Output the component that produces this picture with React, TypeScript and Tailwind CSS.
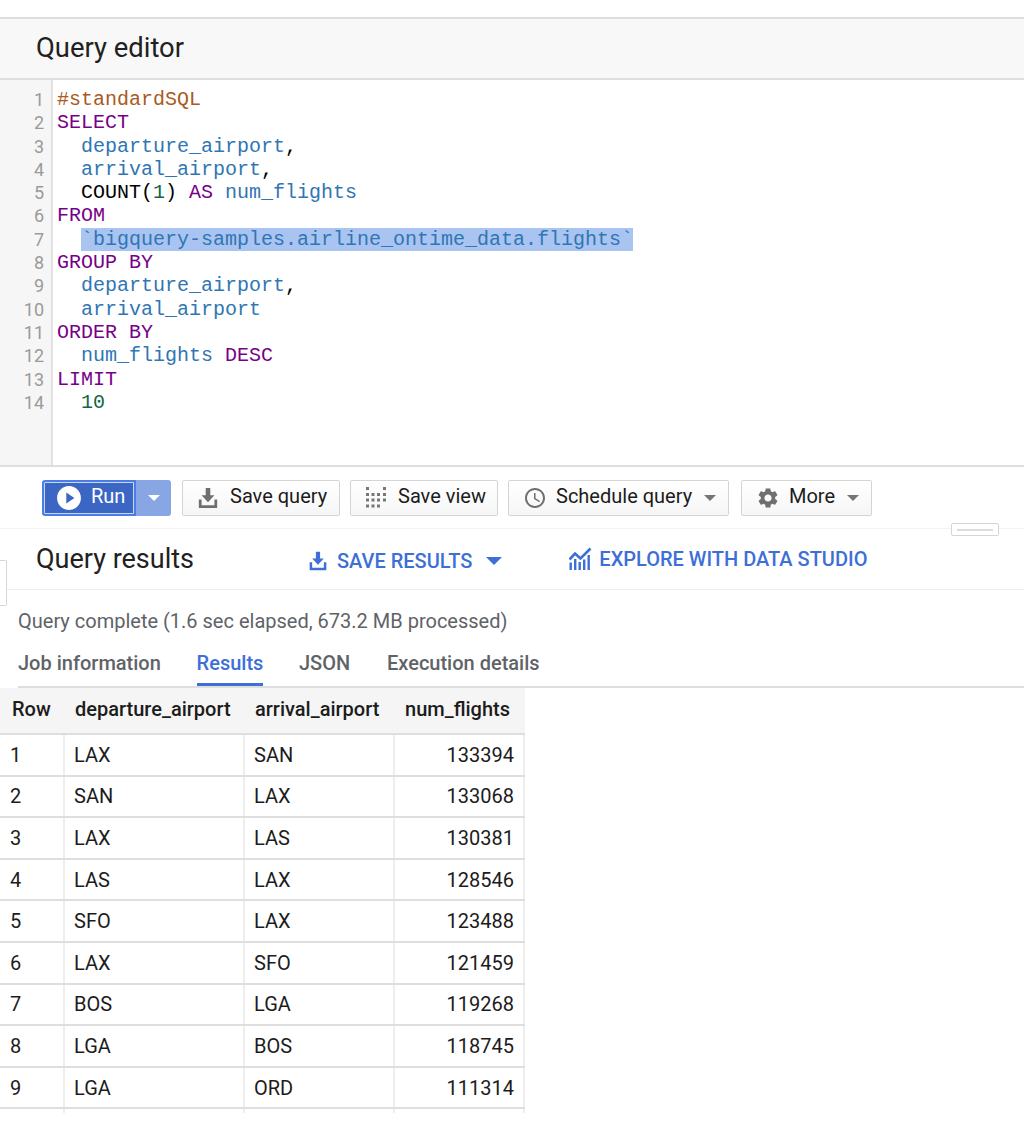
import React from "react";

const ROBOTO = "font-['Roboto',sans-serif]";

type Tok = { t: string; c?: string };

const KW = "text-[#770088]";
const VAR = "text-[#2f76b3]";
const CMT = "text-[#aa5a22]";
const NUM = "text-[#116644]";

const sqlLines: Tok[][] = [
  [{ t: "#standardSQL", c: CMT }],
  [{ t: "SELECT", c: KW }],
  [{ t: "  " }, { t: "departure_airport", c: VAR }, { t: "," }],
  [{ t: "  " }, { t: "arrival_airport", c: VAR }, { t: "," }],
  [{ t: "  COUNT(" }, { t: "1", c: NUM }, { t: ") " }, { t: "AS", c: KW }, { t: " " }, { t: "num_flights", c: VAR }],
  [{ t: "FROM", c: KW }],
  [{ t: "  " }, { t: "`bigquery-samples.airline_ontime_data.flights`", c: `${VAR} bg-[#aac4f2]` }],
  [{ t: "GROUP BY", c: KW }],
  [{ t: "  " }, { t: "departure_airport", c: VAR }, { t: "," }],
  [{ t: "  " }, { t: "arrival_airport", c: VAR }],
  [{ t: "ORDER BY", c: KW }],
  [{ t: "  " }, { t: "num_flights", c: VAR }, { t: " " }, { t: "DESC", c: KW }],
  [{ t: "LIMIT", c: KW }],
  [{ t: "  " }, { t: "10", c: NUM }],
];

const rows = [
  ["1", "LAX", "SAN", "133394"],
  ["2", "SAN", "LAX", "133068"],
  ["3", "LAX", "LAS", "130381"],
  ["4", "LAS", "LAX", "128546"],
  ["5", "SFO", "LAX", "123488"],
  ["6", "LAX", "SFO", "121459"],
  ["7", "BOS", "LGA", "119268"],
  ["8", "LGA", "BOS", "118745"],
  ["9", "LGA", "ORD", "111314"],
];

const Caret = ({ className }: { className: string }) => (
  <svg viewBox="0 0 10 5" className={className} fill="currentColor">
    <path d="M0 0h10L5 5z" />
  </svg>
);

const SaveIcon = ({ className }: { className: string }) => (
  <svg viewBox="0 0 24 24" className={className} fill="currentColor">
    <path d="M9.5 1h5v8H19l-7 7.5L5 9h4.5z" />
    <path d="M2 13.5h3V20h14v-6.500h3V23H2z" />
  </svg>
);

const dots = [
  [1, 1],
  [18, 1],
  [1, 7],
  [6.500, 7],
  [12, 7],
  [18, 7],
  [1, 12.500],
  [6.500, 12.500],
  [12, 12.500],
  [18, 12.500],
  [1, 18.500],
  [6.500, 18.500],
  [12, 18.500],
];

const GridDots = () => (
  <svg viewBox="0 0 24 24" className="w-[24px] h-[24px] text-[#777777]" fill="currentColor">
    {dots.map(([x, y]) => (
      <rect key={`${x}-${y}`} x={x} y={y} width="3" height="3" />
    ))}
  </svg>
);

const ToolButton = ({
  width,
  icon,
  label,
  caret,
}: {
  width: string;
  icon: React.ReactNode;
  label: string;
  caret?: boolean;
}) => (
  <div
    className={`${width} h-[36px] flex items-center pl-[14px] border border-[#d4d4d4] rounded-[2px] bg-gradient-to-b from-white to-[#f6f6f6] text-[20px] text-[#1c1c1c] leading-[28px]`}
  >
    {icon}
    <span className="ml-[9px] flex-1 whitespace-nowrap pb-[3px]">{label}</span>
    {caret && <Caret className="w-[12px] h-[6px] mr-[12px] text-[#757575]" />}
  </div>
);

export default function App() {
  return (
    <div className={`${ROBOTO} w-[1024px] h-[1126px] bg-white overflow-hidden relative`}>
      <div className="h-[17px]" />

      {/* editor header */}
      <div className="h-[63px] bg-[#f8f8f8] border-y-2 border-[#dedede] flex items-center pl-[36px] text-[27.400px] text-[#212121]">
        Query editor
      </div>

      {/* code */}
      <div className="h-[387px] flex border-b-2 border-[#dedede]">
        <div className="w-[53px] bg-[#f6f6f6] border-r-2 border-[#e2e2e2] pt-[8px] pr-[7px] text-right text-[18px] leading-[23.300px] text-[#9a9a9a]">
          {sqlLines.map((_, i) => (
            <div key={i}>{i + 1}</div>
          ))}
        </div>
        <div className="pl-[4px] pt-[8px] font-['Liberation_Mono',monospace] text-[20px] leading-[23.300px] text-black">
          {sqlLines.map((line, i) => (
            <div key={i} className="whitespace-pre h-[23.300px]">
              {line.map((tok, j) => (
                <span key={j} className={tok.c}>
                  {tok.t}
                </span>
              ))}
            </div>
          ))}
        </div>
      </div>

      {/* toolbar */}
      <div className="h-[62px] border-b border-[#f3f3f3] flex items-center pl-[42px]">
        <div className="flex w-[129px] h-[36px] mr-[11px]">
          <div className="w-[94px] h-full flex items-center pl-[14px] bg-[#3c66c4] border-2 border-[#4b7de8] outline outline-1 -outline-offset-3 outline-[#c9d6f2] rounded-l-[3px] text-white text-[20px] leading-[28px]">
            <svg viewBox="0 0 24 24" className="w-[26px] h-[26px] -ml-[2px]" fill="currentColor">
              <path d="M12 1C5.900 1 1 5.900 1 12s4.900 11 11 11 11-4.900 11-11S18.100 1 12 1zm-2.500 16V7l7.500 5-7.500 5z" />
            </svg>
            <span className="ml-[9px] pb-[3px]">Run</span>
          </div>
          <div className="flex-1 bg-[#88a6e3] rounded-r-[3px] flex items-center justify-center">
            <Caret className="w-[12px] h-[6px] text-white" />
          </div>
        </div>
        <div className="w-[158px] mr-[10px]">
          <ToolButton width="w-full" label="Save query" icon={<SaveIcon className="w-[22px] h-[22px] text-[#6f6f6f] mr-[2px]" />} />
        </div>
        <div className="w-[148px] mr-[10px]">
          <ToolButton width="w-full" label="Save view" icon={<GridDots />} />
        </div>
        <div className="w-[221px] mr-[12px]">
          <ToolButton
            width="w-full"
            label="Schedule query"
            caret
            icon={
              <svg viewBox="0 0 24 24" className="w-[24px] h-[24px] text-[#6f6f6f]" fill="currentColor">
                <path d="M11.990 2C6.470 2 2 6.480 2 12s4.470 10 9.990 10C17.520 22 22 17.520 22 12S17.520 2 11.990 2zM12 20c-4.420 0-8-3.580-8-8s3.580-8 8-8 8 3.580 8 8-3.580 8-8 8zm.5-13H11v6l5.250 3.150.75-1.230-4.500-2.670z" />
              </svg>
            }
          />
        </div>
        <div className="w-[131px]">
          <ToolButton
            width="w-full"
            label="More"
            caret
            icon={
              <svg viewBox="0 0 24 24" className="w-[24px] h-[24px] text-[#6f6f6f]" fill="currentColor">
                <path d="M19.140 12.940c.04-.3.06-.61.06-.94 0-.32-.02-.64-.07-.94l2.030-1.580c.18-.14.23-.41.12-.61l-1.920-3.320c-.12-.22-.37-.29-.59-.22l-2.390.96c-.5-.38-1.030-.7-1.620-.94l-.36-2.540c-.04-.24-.24-.41-.48-.41h-3.840c-.24 0-.43.17-.47.41l-.36 2.540c-.59.24-1.130.57-1.620.94l-2.390-.96c-.22-.08-.47 0-.59.22L2.740 8.870c-.12.21-.08.47.12.61l2.030 1.580c-.05.3-.09.63-.09.94s.02.64.07.94l-2.030 1.580c-.18.14-.23.41-.12.61l1.920 3.320c.12.22.37.29.59.22l2.390-.96c.5.38 1.030.7 1.620.94l.36 2.540c.05.24.24.41.48.41h3.840c.24 0 .44-.17.47-.41l.36-2.540c.59-.24 1.130-.56 1.620-.94l2.390.96c.22.08.47 0 .59-.22l1.920-3.320c.12-.22.07-.47-.12-.61l-2.010-1.580zM12 15.600c-1.980 0-3.600-1.620-3.600-3.600s1.620-3.600 3.600-3.600 3.600 1.620 3.600 3.600-1.620 3.600-3.600 3.600z" />
              </svg>
            }
          />
        </div>
      </div>

      {/* results header */}
      <div className="h-[61px] border-b border-[#eeeeee] flex items-center pl-[36px]">
        <div className="w-[272px] text-[27px] text-[#212121] whitespace-nowrap">Query results</div>
        <div className="flex items-center text-[20px] font-medium text-[#3d6fd6] whitespace-nowrap">
          <div className="flex items-center mt-[4px]">
            <SaveIcon className="w-[20px] h-[20px] mr-[9px]" />
            SAVE RESULTS
            <Caret className="w-[16px] h-[8px] ml-[14px]" />
          </div>
          <svg viewBox="0 0 24 24" className="w-[24px] h-[24px] ml-[67px] mr-[6px]" fill="currentColor">
            <path d="M.5 15.500h2.400V23H.5zM5 12h2.400v11H5zM9.500 15h2.400v8H9.500zM14 12.500h2.400V23H14zM18.500 8h2.400v15h-2.400z" />
            <polyline points="0.500,12.500 6,6.500 11.500,11.500 21.500,1.500" fill="none" stroke="currentColor" strokeWidth="2.600" />
          </svg>
          EXPLORE WITH DATA STUDIO
        </div>
      </div>

      {/* status */}
      <div className="h-[63px] flex items-center pl-[18px] pb-[2px] text-[20px] text-[#5f6368] whitespace-nowrap">
        Query complete (1.6 sec elapsed, 673.2 MB processed)
      </div>

      {/* tabs */}
      <div className="ml-[18px] h-[35px] border-b-2 border-[#dedede] flex text-[20px] leading-[20px] font-medium text-[#5f6368] whitespace-nowrap">
        <div className="w-[179px] h-[33px]">Job information</div>
        <div className="w-[66px] h-[33px] border-b-[3px] border-[#3d6fd6] text-[#3d6fd6] flex justify-center">Results</div>
        <div className="w-[124px] pl-[36px]">JSON</div>
        <div>Execution details</div>
      </div>

      {/* table */}
      <div className="w-[525px] text-[20px] text-[#1c1c1c]">
        <div className="h-[47px] bg-[#f5f5f5] border-b-2 border-[#dedede] grid grid-cols-[65px_180px_150px_130px] items-center font-medium whitespace-nowrap pb-[3px]">
          <div className="pl-[12px]">Row</div>
          <div className="pl-[10px]">departure_airport</div>
          <div className="pl-[10px]">arrival_airport</div>
          <div className="pl-[10px]">num_flights</div>
        </div>
        {rows.map((r) => (
          <div key={r[0]} className="h-[41.600px] border-b-2 border-[#dedede] grid grid-cols-[65px_180px_150px_130px] items-stretch">
            <div className="pl-[10px] flex items-center border-r-2 border-[#eeeeee]">{r[0]}</div>
            <div className="pl-[9px] flex items-center border-r-2 border-[#eeeeee]">{r[1]}</div>
            <div className="pl-[9px] flex items-center border-r-2 border-[#eeeeee]">{r[2]}</div>
            <div className="pr-[9px] flex items-center justify-end border-r-2 border-[#eeeeee]">{r[3]}</div>
          </div>
        ))}
        <div className="h-[4px] grid grid-cols-[65px_180px_150px_130px]">
          <div className="border-r-2 border-[#eeeeee]" />
          <div className="border-r-2 border-[#eeeeee]" />
          <div className="border-r-2 border-[#eeeeee]" />
          <div className="border-r-2 border-[#eeeeee]" />
        </div>
      </div>

      {/* split handle and side tab sit over the panels */}
      <div className="absolute left-[951px] top-[523px] w-[48px] h-[13px] bg-white border border-[#d6d6d6] rounded-[2px] flex items-center justify-center">
        <div className="w-[36px] h-[2px] bg-[#dcdcdc]" />
      </div>
      <div className="absolute left-0 top-[560px] w-[7px] h-[46px] bg-white border border-l-0 border-[#d6d6d6] rounded-r-[2px]" />
    </div>
  );
}
